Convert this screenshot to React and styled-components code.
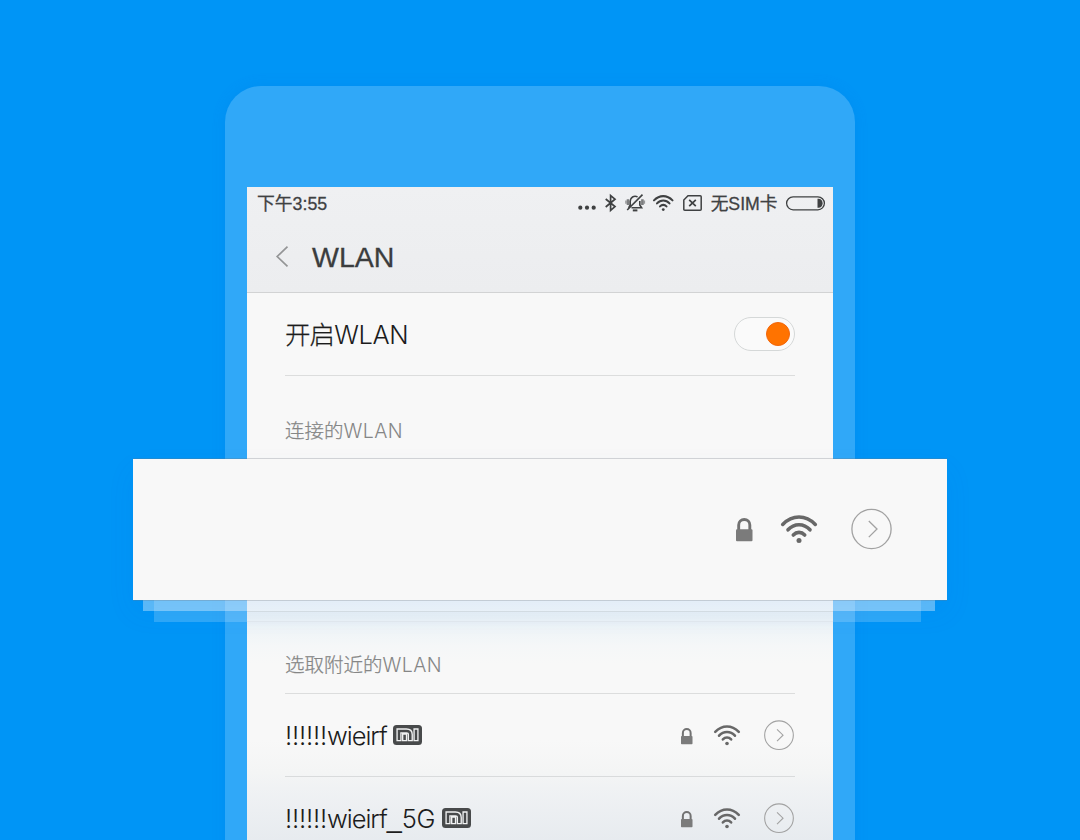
import React from "react";
import styled, { createGlobalStyle } from "styled-components";

const Global = createGlobalStyle`
  * { box-sizing: border-box; }
  body { margin: 0; background: #0095f6; font-family: "Liberation Sans", "Noto Sans CJK SC", sans-serif; }
  svg { display: block; flex: none; overflow: visible; }
`;

const Stage = styled.main`
  height: 840px;
  overflow: hidden;
  display: flex;
  justify-content: center;
  align-items: flex-start;
  padding-top: 86px;
  background: #0095f6;
`;

const Phone = styled.div`
  width: 630px;
  height: 900px;
  padding: 101px 22px 0;
  border-radius: 36px 36px 0 0;
  background: #30a8f8;
  box-shadow: 0 0 14px rgba(0, 110, 225, 0.16);
`;

const Screen = styled.div`
  display: flex;
  flex-direction: column;
  height: 800px;
  background: #f8f8f8;
`;

const Header = styled.header`
  height: 106px;
  background: linear-gradient(#eff0f2, #ecedef);
  border-bottom: 1px solid #d2d3d4;
`;

const StatusBar = styled.div`
  display: flex;
  align-items: center;
  justify-content: space-between;
  height: 32px;
  padding: 0 8px 0 10px;
`;

const StatusText = styled.span`
  font-size: ${(p) => p.$size}px;
  line-height: 20px;
  padding-top: 2px;
  font-weight: 400;
  white-space: nowrap;
  color: #3f4142;
  -webkit-text-stroke: 0.3px #3f4142;
`;

const StatusIcons = styled.div`
  display: flex;
  align-items: center;
  color: #3f4142;
`;

const Spacer = styled.i`
  width: ${(p) => p.$w}px;
  flex: none;
`;

const TitleBar = styled.div`
  display: flex;
  align-items: center;
  height: 75px;
  padding: 0 0 1px 29px;
`;

const Title = styled.h1`
  margin: 0 0 0 24px;
  padding-top: 2px;
  font-size: 28.5px;
  font-weight: 400;
  line-height: 36px;
  color: #3b3d3e;
  -webkit-text-stroke: 0.3px #3b3d3e;
`;

const Row = styled.div`
  display: flex;
  align-items: center;
  justify-content: space-between;
  height: 83px;
  margin: 0 38px;
  border-bottom: 1px solid #dcdddd;
`;

const Label = styled.span`
  padding-top: 2px;
  font-family: Inter, "Noto Sans CJK SC", sans-serif;
  font-weight: 300;
  font-size: 25.5px;
  letter-spacing: ${(p) => p.$spacing || 0}px;
  line-height: 34px;
  white-space: nowrap;
  color: #1c1c1c;
`;

const Underscore = styled(Label)`
  padding-top: 0;
  font-family: "Liberation Sans", sans-serif;
  font-size: 27px;
`;

const Han = styled.span`
  letter-spacing: ${(p) => p.$spacing || 0}px;
  -webkit-text-stroke: 0.25px currentColor;
`;

const Switch = styled.div`
  display: flex;
  justify-content: flex-end;
  align-items: center;
  width: 61px;
  height: 34px;
  padding-right: 4px;
  border: 1px solid #d5d8d8;
  border-radius: 17px;
  background: #fafafa;
`;

const Knob = styled.div`
  width: 24px;
  height: 24px;
  border-radius: 50%;
  background: #ff7300;
  border: 1px solid #f3660a;
`;

const Section = styled.div`
  height: ${(p) => p.$h}px;
  padding: ${(p) => p.$top}px 0 0;
  margin: 0 38px;
  border-bottom: ${(p) => (p.$line ? "1px solid #dcdddd" : "none")};
  font-family: Inter, "Noto Sans CJK SC", sans-serif;
  font-weight: 300;
  font-size: 19.5px;
  line-height: 28px;
  letter-spacing: 0.4px;
  color: #858686;
  white-space: nowrap;
`;

const Lifted = styled.div`
  position: relative;
  flex: none;
  height: 141px;
  margin: 0 -114px;
`;

const Card = styled.div`
  position: relative;
  display: flex;
  align-items: center;
  justify-content: flex-end;
  height: 141px;
  padding: 0 55px 1px 0;
  background: #f8f8f8;
  box-shadow: 0 -1px 0 rgba(110, 120, 125, 0.28), 0 1px 0 rgba(110, 120, 125, 0.28),
    0 12px 26px rgba(0, 100, 220, 0.08);
`;

const Layer = styled.div`
  position: absolute;
  top: 100%;
  left: ${(p) => p.$left}px;
  right: ${(p) => p.$right}px;
  height: ${(p) => p.$h}px;
  background: rgba(255, 255, 255, ${(p) => p.$alpha});
`;

const Lower = styled.div`
  flex: 1;
  background:
    linear-gradient(#d3d9dd, #d3d9dd) 0 11px / 100% 1px no-repeat,
    linear-gradient(#dde5ea, #dde5ea) 0 21px / 100% 1px no-repeat,
    linear-gradient(
      #e8f0f6 0,
      #e6eef5 18px,
      #eef4f7 28px,
      #f5f7f8 46px,
      #f8f8f8 64px,
      #f8f8f8 140px,
      #f4f5f5 172px,
      #f0f2f4 188px,
      #e7ebef 240px
    );
`;

const Network = styled(Row)`
  border-color: #d9dbdc;
  padding-right: 1px;
`;

const Name = styled.div`
  display: flex;
  align-items: center;
`;

const Actions = styled.div`
  display: flex;
  align-items: center;
`;

const LockBox = styled.div`
  padding-top: 2px;
`;

function Wifi({ w, color, sw = 3.6 }) {
  return (
    <svg width={w} height={(w * 28) / 36} viewBox="0 0 36 28" fill="none" stroke={color} strokeWidth={sw} strokeLinecap="round">
      <path d="M1.7 9.4C11.4 -.5 24.6 -.5 34.3 9.4M7 14.8C13.2 8 22.8 8 29 14.8M12.3 20C15.6 16.5 20.4 16.5 23.7 20" />
      <circle cx="18" cy="25.6" r="2.5" fill={color} stroke="none" />
    </svg>
  );
}

function Lock({ w }) {
  return (
    <LockBox>
      <svg width={w} height={(w * 22.5) / 16} viewBox="0 0 16 22.5">
        <path d="M2.6 12V6.8a5.4 5.4 0 0 1 10.8 0V12" fill="none" stroke="#727272" strokeWidth="2.8" />
        <rect y="11" width="16" height="11.5" rx="1" fill="#7b7b7b" />
      </svg>
    </LockBox>
  );
}

function Arrow({ size, sw = 1.3, cy = 20 }) {
  return (
    <svg width={size} height={size} viewBox="0 0 41 41" fill="none" stroke="#a2a2a2" strokeWidth={sw}>
      <circle cx="20.5" cy={cy} r="19.6" />
      <path d={`M17.8 ${cy - 8}l8.2 8l-8.2 8.1`} />
    </svg>
  );
}

function MiBadge() {
  const glyph = "M6 13.7V5.9H13.4Q17.3 5.9 17.3 9.4V13.7M11.6 11V13.7M23 5.9V13.7";
  return (
    <svg width="29" height="20" viewBox="0 0 29 20" fill="none" strokeLinecap="square">
      <rect width="29" height="20" rx="3.5" fill="#484a4b" />
      <path d={glyph} stroke="#f1f2f2" strokeWidth="5.2" />
      <path d={glyph} stroke="#484a4b" strokeWidth="2.5" />
    </svg>
  );
}

function Dots() {
  return (
    <svg width="18" height="18" fill="currentColor">
      <circle cx="2.3" cy="13.7" r="2.1" />
      <circle cx="9" cy="13.7" r="2.1" />
      <circle cx="15.7" cy="13.7" r="2.1" />
    </svg>
  );
}

function Bluetooth() {
  return (
    <svg width="11" height="18" fill="none" stroke="currentColor" strokeWidth="1.7">
      <path d="M.7 5L10 12.6L5.6 16.4V1.6L10 5.2L.7 13" />
    </svg>
  );
}

function Muted() {
  return (
    <svg width="20" height="18" fill="none" stroke="currentColor" strokeWidth="1.6">
      <path d="M6.5 13.8H16.6L14.8 11V7M12.6 2.9C9 1.2 5.2 3.4 5.2 7.2V11L3.6 13.8M17.5 .6L2.2 16" />
      <path d="M7.8 16.4H12.4" strokeWidth="2" />
      <path d="M3 5.2V11M17.4 5.2V11" strokeWidth="2.6" opacity=".65" />
      <path d="M.9 6.5V9.8M19.4 6.5V9.8" strokeWidth="1.4" opacity=".5" />
    </svg>
  );
}

function Sim() {
  return (
    <svg width="19" height="18" fill="none" stroke="currentColor" strokeWidth="1.5">
      <path d="M5 1.8H17.2Q18.2 1.8 18.2 2.8V15.2Q18.2 16.2 17.2 16.2H1.8Q.8 16.2 .8 15.2V6Z" />
      <path d="M6.2 5.8L12.8 12.2M12.8 5.8L6.2 12.2" strokeWidth="1.7" />
    </svg>
  );
}

function Battery() {
  return (
    <svg width="39" height="18">
      <rect x=".6" y="2.8" width="37.8" height="13" rx="6.5" fill="none" stroke="currentColor" strokeWidth="1.3" />
      <path d="M31.5 4.8H33C35.4 5.2 36.6 7.2 36.6 9.3S35.4 13.4 33 13.8H31.5Z" fill="currentColor" />
    </svg>
  );
}

function NetworkRow({ band, gap }) {
  return (
    <Network>
      <Name>
        <Label $spacing={-0.2}>!!!!!!</Label>
        <Label $spacing={-1}>wieirf</Label>
        {band && <Underscore>_</Underscore>}
        {band && <Label $spacing={-0.3}>{band}</Label>}
        <Spacer $w={gap} />
        <MiBadge />
      </Name>
      <Actions>
        <Lock w={11.5} />
        <Spacer $w={21} />
        <Wifi w={26} color="#686868" />
        <Spacer $w={24.5} />
        <Arrow size={30} sw={1.5} cy={20.8} />
      </Actions>
    </Network>
  );
}

export default function App() {
  return (
    <>
      <Global />
      <Stage>
        <Phone>
          <Screen>
            <Header>
              <StatusBar>
                <StatusText $size={17.8}>下午3:55</StatusText>
                <StatusIcons>
                  <Dots />
                  <Spacer $w={9} />
                  <Bluetooth />
                  <Spacer $w={9} />
                  <Muted />
                  <Spacer $w={8} />
                  <Wifi w={20.5} color="#3f4142" />
                  <Spacer $w={9.5} />
                  <Sim />
                  <Spacer $w={9} />
                  <StatusText $size={17.7}>无SIM卡</StatusText>
                  <Spacer $w={8.5} />
                  <Battery />
                </StatusIcons>
              </StatusBar>
              <TitleBar>
                <svg width="12" height="21" fill="none" stroke="#949596" strokeWidth="1.7">
                  <path d="M11.5 .7L1.2 10.5L11.5 20.3" />
                </svg>
                <Title>WLAN</Title>
              </TitleBar>
            </Header>
            <Row>
              <Label $spacing={-0.4}><Han $spacing={-0.9}>开启</Han>WLAN</Label>
              <Switch>
                <Knob />
              </Switch>
            </Row>
            <Section $h={83} $top={41}><Han>连接的</Han>WLAN</Section>
            <Lifted>
              <Layer $left={21} $right={26} $h={22} $alpha={0.18} />
              <Layer $left={10} $right={12} $h={11} $alpha={0.37} />
              <Card>
                <Lock w={16.5} />
                <Spacer $w={28.5} />
                <Wifi w={36} color="#686868" />
                <Spacer $w={34} />
                <Arrow size={41} />
              </Card>
            </Lifted>
            <Lower>
              <Section $h={94} $top={51} $line><Han>选取附近的</Han>WLAN</Section>
              <NetworkRow gap={6} />
              <NetworkRow band="5G" gap={6.5} />
            </Lower>
          </Screen>
        </Phone>
      </Stage>
    </>
  );
}
